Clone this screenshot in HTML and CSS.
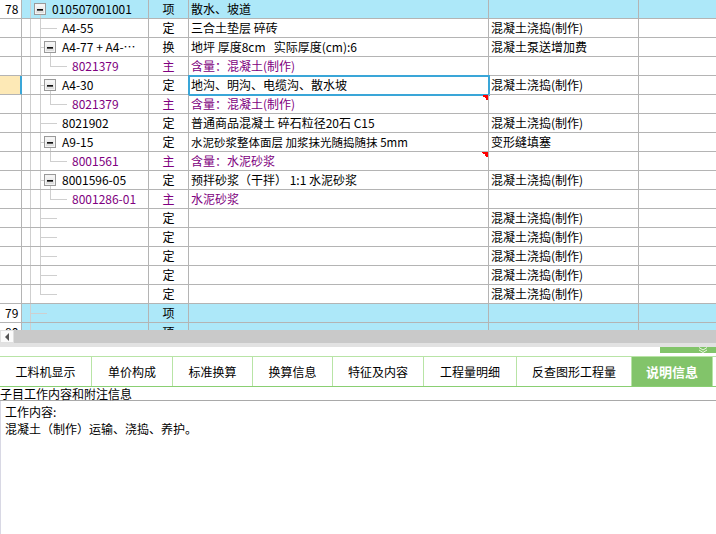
FILE: index.html
```html
<!DOCTYPE html>
<html lang="zh-CN">
<head>
<meta charset="utf-8">
<title>说明信息</title>
<link rel="stylesheet" href="styles.css">
</head>
<body>
<div class="app">
  <div class="grid">
    <div class="row blue">
      <div class="c num">78</div>
      <div class="c tree t-root"><span class="box"></span><span>010507001001</span></div>
      <div class="c type">项</div>
      <div class="c name">散水、坡道</div>
      <div class="c desc"></div>
      <div class="c rest"></div>
    </div>
    <div class="row">
      <div class="c num"></div>
      <div class="c tree t-leaf1">A4-55</div>
      <div class="c type">定</div>
      <div class="c name">三合土垫层 碎砖</div>
      <div class="c desc">混凝土浇捣(制作)</div>
      <div class="c rest"></div>
    </div>
    <div class="row">
      <div class="c num"></div>
      <div class="c tree t-node1"><span class="box"></span><span>A4-77 + A4-…</span></div>
      <div class="c type">换</div>
      <div class="c name">地坪 厚度8cm&nbsp;&nbsp;&nbsp;实际厚度(cm):6</div>
      <div class="c desc">混凝土泵送增加费</div>
      <div class="c rest"></div>
    </div>
    <div class="row purple">
      <div class="c num"></div>
      <div class="c tree t-leaf2">8021379</div>
      <div class="c type">主</div>
      <div class="c name">含量：混凝土(制作)</div>
      <div class="c desc"></div>
      <div class="c rest"></div>
    </div>
    <div class="row">
      <div class="c num current"></div>
      <div class="c tree t-node1"><span class="box"></span><span>A4-30</span></div>
      <div class="c type">定</div>
      <div class="c name selected">地沟、明沟、电缆沟、散水坡</div>
      <div class="c desc">混凝土浇捣(制作)</div>
      <div class="c rest"></div>
    </div>
    <div class="row purple">
      <div class="c num"></div>
      <div class="c tree t-leaf2">8021379</div>
      <div class="c type">主</div>
      <div class="c name flag">含量：混凝土(制作)</div>
      <div class="c desc"></div>
      <div class="c rest"></div>
    </div>
    <div class="row">
      <div class="c num"></div>
      <div class="c tree t-leaf1">8021902</div>
      <div class="c type">定</div>
      <div class="c name">普通商品混凝土 碎石粒径20石 C15</div>
      <div class="c desc">混凝土浇捣(制作)</div>
      <div class="c rest"></div>
    </div>
    <div class="row">
      <div class="c num"></div>
      <div class="c tree t-node1"><span class="box"></span><span>A9-15</span></div>
      <div class="c type">定</div>
      <div class="c name small">水泥砂浆整体面层 加浆抹光随捣随抹 5mm</div>
      <div class="c desc">变形缝填塞</div>
      <div class="c rest"></div>
    </div>
    <div class="row purple">
      <div class="c num"></div>
      <div class="c tree t-leaf2">8001561</div>
      <div class="c type">主</div>
      <div class="c name flag">含量：水泥砂浆</div>
      <div class="c desc"></div>
      <div class="c rest"></div>
    </div>
    <div class="row">
      <div class="c num"></div>
      <div class="c tree t-node1"><span class="box"></span><span>8001596-05</span></div>
      <div class="c type">定</div>
      <div class="c name">预拌砂浆（干拌） 1:1 水泥砂浆</div>
      <div class="c desc">混凝土浇捣(制作)</div>
      <div class="c rest"></div>
    </div>
    <div class="row purple">
      <div class="c num"></div>
      <div class="c tree t-leaf2">8001286-01</div>
      <div class="c type">主</div>
      <div class="c name">水泥砂浆</div>
      <div class="c desc"></div>
      <div class="c rest"></div>
    </div>
    <div class="row">
      <div class="c num"></div>
      <div class="c tree t-leaf1"></div>
      <div class="c type">定</div>
      <div class="c name"></div>
      <div class="c desc">混凝土浇捣(制作)</div>
      <div class="c rest"></div>
    </div>
    <div class="row">
      <div class="c num"></div>
      <div class="c tree t-leaf1"></div>
      <div class="c type">定</div>
      <div class="c name"></div>
      <div class="c desc">混凝土浇捣(制作)</div>
      <div class="c rest"></div>
    </div>
    <div class="row">
      <div class="c num"></div>
      <div class="c tree t-leaf1"></div>
      <div class="c type">定</div>
      <div class="c name"></div>
      <div class="c desc">混凝土浇捣(制作)</div>
      <div class="c rest"></div>
    </div>
    <div class="row">
      <div class="c num"></div>
      <div class="c tree t-leaf1"></div>
      <div class="c type">定</div>
      <div class="c name"></div>
      <div class="c desc">混凝土浇捣(制作)</div>
      <div class="c rest"></div>
    </div>
    <div class="row">
      <div class="c num"></div>
      <div class="c tree t-last1"></div>
      <div class="c type">定</div>
      <div class="c name"></div>
      <div class="c desc">混凝土浇捣(制作)</div>
      <div class="c rest"></div>
    </div>
    <div class="row blue">
      <div class="c num">79</div>
      <div class="c tree t-root2"></div>
      <div class="c type">项</div>
      <div class="c name"></div>
      <div class="c desc"></div>
      <div class="c rest"></div>
    </div>
    <div class="row blue">
      <div class="c num">80</div>
      <div class="c tree t-trunk"></div>
      <div class="c type">项</div>
      <div class="c name"></div>
      <div class="c desc"></div>
      <div class="c rest"></div>
    </div>
  </div>

  <div class="hscroll">
    <div class="arrow"><span class="tri"></span></div>
    <div class="thumb"></div>
  </div>
  <div class="strip"></div>
  <div class="collapse">
    <div class="collapse-btn">
      <svg width="10" height="6" viewBox="0 0 10 6"><path d="M1 0.5 L5 3 L9 0.5 M1 3 L5 5.5 L9 3" fill="none" stroke="#e8f5e0" stroke-width="1"/></svg>
    </div>
  </div>

  <div class="tabs">
    <div class="tab w1">工料机显示</div>
    <div class="tab w2">单价构成</div>
    <div class="tab w3">标准换算</div>
    <div class="tab w3">换算信息</div>
    <div class="tab w5">特征及内容</div>
    <div class="tab w6">工程量明细</div>
    <div class="tab w7">反查图形工程量</div>
    <div class="tab active">说明信息</div>
    <div class="tab-rest"></div>
  </div>

  <div class="label">子目工作内容和附注信息</div>
  <div class="content">
    <div class="line">工作内容:</div>
    <div class="line">混凝土（制作）运输、浇捣、养护。</div>
  </div>
</div>
</body>
</html>
```

FILE: styles.css
```css
* { box-sizing: border-box; }

html, body {
  margin: 0;
  padding: 0;
  background: #fff;
}

body {
  font-family: "Noto Sans CJK SC", "Noto Sans", sans-serif;
  font-size: 12px;
  color: #000;
}

.app {
  width: 716px;
  height: 534px;
  display: flex;
  flex-direction: column;
  overflow: hidden;
}

/* ---------- grid ---------- */
.grid {
  height: 330px;
  overflow: hidden;
  flex: none;
}

.row {
  display: flex;
  height: 19px;
}

.c {
  height: 19px;
  line-height: 18px;
  border-right: 1px solid #b4b4b4;
  border-bottom: 1px solid #b4b4b4;
  white-space: nowrap;
  overflow: hidden;
  flex: none;
}

.num { width: 22px; padding-left: 5px; background: #fff; }
.num.current {
  background: #fde9b6;
  border-right-color: #3aa6d8;
  box-shadow: inset -1px 0 0 #3aa6d8;
}
.tree { width: 127px; display: flex; align-items: center; }
.type { width: 40px; text-align: center; }
.name { width: 300px; padding-left: 2px; }
.desc { width: 150px; padding-left: 2px; }
.rest { flex: 1; border-right: none; }

.name.small { font-size: 11.5px; }

.row.blue .tree,
.row.blue .type,
.row.blue .name,
.row.blue .desc,
.row.blue .rest { background-color: #ade8f9; }

.row.purple .tree,
.row.purple .type,
.row.purple .name { color: #800080; }

.selected {
  outline: 2px solid #3aa6d8;
  outline-offset: -1px;
}

.flag {
  background: linear-gradient(225deg, #ff0000 50%, transparent 50%) right top / 6px 6px no-repeat;
}

/* ---------- tree guides ---------- */
.tree {
  --tl: linear-gradient(#cfcfcf, #cfcfcf);
}

.box {
  width: 12px;
  height: 12px;
  flex: none;
  border: 1px solid #9a9a9a;
  background: linear-gradient(#fbfbfb, #d9d9d9);
  box-shadow: inset 0 0 0 1px #f4f4f4;
  margin-right: 6px;
  display: flex;
  align-items: center;
  justify-content: center;
}
.box::before {
  content: "";
  width: 6px;
  height: 1px;
  background: #111;
  box-shadow: 0 1px 0 #555;
}

.t-root {
  padding-left: 12px;
  background:
    var(--tl) 8px 0 / 1px 100% no-repeat,
    var(--tl) 18px 15px / 1px 100% no-repeat;
}
.t-root2 {
  background:
    var(--tl) 8px 0 / 1px 100% no-repeat,
    var(--tl) 8px 9px / 17px 1px no-repeat;
}
.t-trunk {
  background: var(--tl) 8px 0 / 1px 100% no-repeat;
}
.t-leaf1 {
  padding-left: 40px;
  background:
    var(--tl) 8px 0 / 1px 100% no-repeat,
    var(--tl) 18px 0 / 1px 100% no-repeat,
    var(--tl) 18px 9px / 17px 1px no-repeat;
}
.t-last1 {
  padding-left: 40px;
  background:
    var(--tl) 8px 0 / 1px 100% no-repeat,
    var(--tl) 18px 0 / 1px 10px no-repeat,
    var(--tl) 18px 9px / 17px 1px no-repeat;
}
.t-node1 {
  padding-left: 22px;
  background:
    var(--tl) 8px 0 / 1px 100% no-repeat,
    var(--tl) 18px 0 / 1px 100% no-repeat,
    var(--tl) 18px 9px / 4px 1px no-repeat,
    var(--tl) 28px 15px / 1px 100% no-repeat;
}
.t-leaf2 {
  padding-left: 50px;
  background:
    var(--tl) 8px 0 / 1px 100% no-repeat,
    var(--tl) 18px 0 / 1px 100% no-repeat,
    var(--tl) 28px 0 / 1px 10px no-repeat,
    var(--tl) 28px 9px / 17px 1px no-repeat;
}

/* ---------- scrollbar ---------- */
.hscroll {
  height: 13px;
  display: flex;
  flex: none;
  background: #c9c9c9;
}
.arrow {
  width: 14px;
  background: #fbfbfb;
  border: 1px solid #e0e0e0;
  display: flex;
  align-items: center;
  justify-content: center;
}
.tri {
  width: 0;
  height: 0;
  border-top: 4px solid transparent;
  border-bottom: 4px solid transparent;
  border-right: 4px solid #555;
  margin-right: 1px;
}
.thumb { flex: 1; background: #c9c9c9; }

.strip {
  height: 4px;
  background: #e2e2e2;
  flex: none;
}

.collapse {
  height: 9px;
  flex: none;
  display: flex;
  justify-content: flex-end;
  align-items: flex-start;
}
.collapse-btn {
  width: 56px;
  height: 6px;
  background: #82c46a;
  display: flex;
  justify-content: flex-end;
  align-items: flex-start;
  padding-right: 8px;
}
.collapse-btn svg { display: block; }

/* ---------- tabs ---------- */
.tabs {
  display: flex;
  flex: none;
  height: 31px;
  border-top: 1px solid #b8e4a6;
  border-bottom: 1px solid #8acf73;
}
.tab {
  height: 29px;
  line-height: 29px;
  text-align: center;
  border-right: 1px solid #b8e4a6;
  flex: none;
  white-space: nowrap;
}
.w1 { width: 92px; }
.w2 { width: 81px; }
.w3 { width: 80px; }
.w5 { width: 91px; }
.w6 { width: 93px; }
.w7 { width: 115px; }
.tab.active {
  width: 80px;
  border-right: none;
  background: #82c46a;
  color: #fff;
  font-weight: bold;
  font-size: 13px;
}
.tab-rest {
  flex: 1;
  border-left: 1px solid #b8e4a6;
}

/* ---------- info panel ---------- */
.label {
  flex: none;
  height: 14px;
  line-height: 13px;
  border-bottom: 1px solid #a9a9a9;
  white-space: nowrap;
}

.content {
  flex: 1;
  border-left: 1px solid #d8d8e4;
  padding: 2px 4px;
}
.line {
  height: 17px;
  line-height: 17px;
  white-space: nowrap;
}
```
